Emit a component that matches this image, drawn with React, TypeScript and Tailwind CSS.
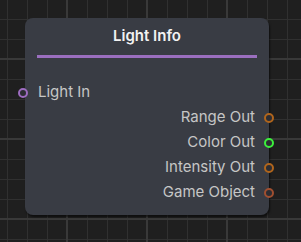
import React from 'react';

interface Port {
  label: string;
  color: string;
}

const outputs: Port[] = [
  { label: 'Range Out', color: 'border-[#b0651c]' },
  { label: 'Color Out', color: 'border-[#3cf03c]' },
  { label: 'Intensity Out', color: 'border-[#b0651c]' },
  { label: 'Game Object', color: 'border-[#a04f30]' },
];

const App = () => {
  return (
    <div
      className="w-[301px] h-[242px] overflow-hidden bg-[#1f1f1f] pl-[25px] pt-[18px] font-['Inter',sans-serif] bg-[linear-gradient(to_right,#393939_2px,transparent_2px),linear-gradient(to_bottom,#393939_2px,transparent_2px),linear-gradient(to_right,#303030_1px,transparent_1px),linear-gradient(to_bottom,#303030_1px,transparent_1px)] bg-[size:80px_80px,80px_80px,20px_20px,20px_20px] bg-[position:66px_0,0_58px,7px_0,0_19px]"
    >
      {/* нода */}
      <div className="relative w-[244px] h-[197px] rounded-lg bg-[#393c44] shadow-[1px_2px_2px_rgba(0,0,0,0.55)] flex flex-col">
        <div className="pt-[9px] h-[27px] text-center text-[15px] leading-[18px] font-semibold text-[#f2f2f2]">
          Light Info
        </div>
        <div className="mt-[10px] mx-[12px] h-[3px] bg-[#9b6fbf]" />

        <div className="mt-[22px] flex flex-col">
          <div className="relative h-[25px] flex items-center pl-[13px] text-[15px] text-[#c6c6c6]">
            <span className="absolute left-[-7px] top-[7.5px] w-[10px] h-[10px] rounded-full border-2 border-[#9d6cc0] bg-[#2c2d33]" />
            Light In
          </div>
          {outputs.map((port) => (
            <div
              key={port.label}
              className="relative h-[25px] flex items-center justify-end pr-[14px] text-[15px] text-[#c6c6c6]"
            >
              {port.label}
              <span
                className={`absolute right-[-5px] top-[7.5px] w-[10px] h-[10px] rounded-full border-2 ${port.color} bg-[#2c2d33]`}
              />
            </div>
          ))}
        </div>
      </div>
    </div>
  );
};

export default App;
